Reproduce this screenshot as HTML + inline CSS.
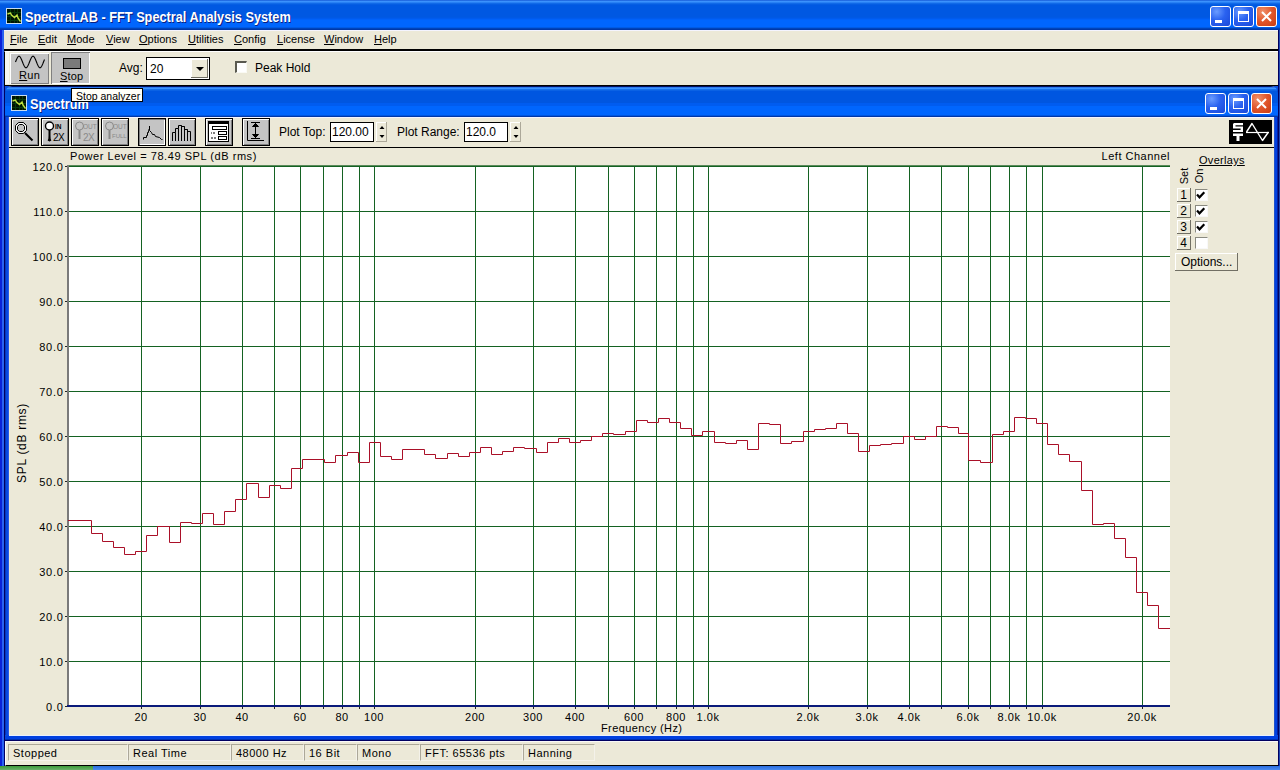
<!DOCTYPE html>
<html><head><meta charset="utf-8">
<style>
*{margin:0;padding:0;box-sizing:border-box}
html,body{width:1280px;height:770px;overflow:hidden;background:#ECE9D8}
body{position:relative;font-family:"Liberation Sans",sans-serif;font-size:11px;color:#000}
.a{position:absolute}
.tb{background:linear-gradient(#0843C8 0px,#3C94FE 1px,#3A8FFB 2px,#1671EC 3px,#0B62E4 4px,#0058E2 5px,#0058E2 17px,#005AE8 18px,#005CF4 19px,#0066FE 20px,#0066FE 27px,#0050CC 28px,#0038A8 29px)}
.ttl{color:#fff;font-weight:bold;font-size:14px;text-shadow:1px 1px 0 #0a1e80;white-space:nowrap}
.cbtn{width:21px;height:21px;border:1px solid #fff;border-radius:3px;background:radial-gradient(circle at 30% 25%,#6a9cff 0,#2a62f0 45%,#1a48d8 100%)}
.cbtn.x{background:radial-gradient(circle at 30% 25%,#f0906a 0,#e0552a 50%,#c83c14 100%)}
.menu span{position:absolute;top:33px;white-space:nowrap}
u{text-decoration:underline}
.yl{position:absolute;left:20px;width:43.5px;text-align:right;font-size:11px;line-height:12px;letter-spacing:0.7px}
.xl{position:absolute;top:711px;width:80px;text-align:center;font-size:11px;line-height:12px;letter-spacing:0.5px}
.tbtn{position:absolute;top:118px;width:28px;height:28px;border:1px solid #000;background:#c4c4c4;box-shadow:inset 1px 1px 0 #fff,inset -1px -1px 0 #808080}
.tbtn.dn{box-shadow:inset 1px 1px 0 #808080,inset -1px -1px 0 #fff}
.sp{position:absolute;top:744px;height:17px;border-top:1px solid #aca899;border-left:1px solid #aca899;border-right:1px solid #f4f2ea;border-bottom:1px solid #f4f2ea;padding:1px 0 0 4px;font-size:11px;line-height:14px;white-space:nowrap;letter-spacing:0.5px}
.rbtn{position:absolute;width:14px;height:14px;background:#ECE9D8;border-right:1px solid #716f64;border-bottom:1px solid #716f64;box-shadow:inset 1px 1px 0 #fff;text-align:center;font-size:12px;line-height:14px}
.chk{position:absolute;width:13px;height:12px;background:#fff;border-top:1px solid #8a8a80;border-left:1px solid #8a8a80;border-right:1px solid #f8f8f8;border-bottom:1px solid #f8f8f8}
</style></head><body>
<!-- main frame -->
<div class="a" style="left:0;top:0;width:1280px;height:770px;background:linear-gradient(90deg,#0A22D8 0,#0A22D8 2px,#2A62F0 2px,#2A62F0 4px,#000060 4px,#000060 5px,#0A4FE0 5px,#0A4FE0 1278px,#000060 1278px,#000060 1279px,#2048B0 1279px)"></div>
<div class="a tb" style="left:0;top:0;width:1280px;height:30px"></div>
<!-- title icon -->
<div class="a" style="left:6px;top:8px;width:16px;height:16px;background:#001400;border:1px solid #c8dcf0">
<svg width="14" height="14" style="position:absolute;left:0;top:0"><path d="M0 3.5H14M0 7.5H14M0 11.5H14M3.5 0V14M7.5 0V14M10.5 0V14" stroke="#063a0c" stroke-width="1"/><polyline points="0.5,5 3.5,4 4.5,6 7.5,8.5 10,6 11,9 13.5,12.5" fill="none" stroke="#c0e040" stroke-width="1.4"/></svg></div>
<div class="a ttl" style="left:25px;top:9px;transform:scaleX(0.91);transform-origin:0 0">SpectraLAB - FFT Spectral Analysis System</div>
<div class="a cbtn" style="left:1210px;top:6px"><div class="a" style="left:4px;top:13px;width:7px;height:3px;background:#fff"></div></div>
<div class="a cbtn" style="left:1233px;top:6px"><div class="a" style="left:4px;top:4px;width:11px;height:11px;border:1px solid #fff;border-top-width:3px"></div></div>
<div class="a cbtn x" style="left:1256px;top:6px"><svg width="19" height="19" class="a" style="left:0;top:0"><path d="M5 5L14 14M14 5L5 14" stroke="#fff" stroke-width="2"/></svg></div>

<!-- menu bar -->
<div class="a" style="left:4px;top:30px;width:1274px;height:20px;background:#ECE9D8;border-top:1px solid #f4f4ff"></div>
<div class="menu">
<span style="left:10px"><u>F</u>ile</span>
<span style="left:38px"><u>E</u>dit</span>
<span style="left:67px"><u>M</u>ode</span>
<span style="left:106px"><u>V</u>iew</span>
<span style="left:139px"><u>O</u>ptions</span>
<span style="left:188px"><u>U</u>tilities</span>
<span style="left:234px"><u>C</u>onfig</span>
<span style="left:277px"><u>L</u>icense</span>
<span style="left:324px"><u>W</u>indow</span>
<span style="left:374px"><u>H</u>elp</span>
</div>
<div class="a" style="left:4px;top:49px;width:1274px;height:2px;background:#000"></div>

<!-- toolbar -->
<div class="a" style="left:4px;top:51px;width:1274px;height:35px;background:#ECE9D8;border-left:1px solid #000;border-top:1px solid #fff"></div>
<div class="a" style="left:5px;top:52px;width:1273px;height:32px;border-left:4px solid #f6f6f0"></div>
<div class="a" style="left:10px;top:53px;width:39px;height:31px;background:#c4c4c4;box-shadow:inset 1px 1px 0 #fff,inset -1px -1px 0 #808080"></div>
<svg class="a" style="left:0;top:0" width="60" height="90"><polyline points="15.5,62.0 16.0,60.7 16.5,59.5 17.0,58.4 17.5,57.5 18.0,56.8 18.5,56.3 19.0,56.2 19.5,56.3 20.0,56.8 20.5,57.5 21.0,58.4 21.5,59.5 22.0,60.7 22.5,62.0 23.0,63.3 23.5,64.5 24.0,65.6 24.5,66.5 25.0,67.2 25.5,67.7 26.0,67.8 26.5,67.7 27.0,67.2 27.5,66.5 28.0,65.6 28.5,64.5 29.0,63.3 29.5,62.0 30.0,60.7 30.5,59.5 31.0,58.4 31.5,57.5 32.0,56.8 32.5,56.3 33.0,56.2 33.5,56.3 34.0,56.8 34.5,57.5 35.0,58.4 35.5,59.5 36.0,60.7 36.5,62.0 37.0,63.3 37.5,64.5 38.0,65.6 38.5,66.5 39.0,67.2 39.5,67.7 40.0,67.8 40.5,67.7 41.0,67.2 41.5,66.5 42.0,65.6 42.5,64.5 43.0,63.3 43.5,62.0 44.0,60.7 44.5,59.5" fill="none" stroke="#000" stroke-width="1.1"/></svg>
<div class="a" style="left:19px;top:69px;font-size:11px;letter-spacing:0.3px"><u>R</u>un</div>
<div class="a" style="left:51px;top:52px;width:39px;height:32px;background:#c4c4c4;box-shadow:inset 1px 1px 0 #808080,inset -1px -1px 0 #fff"></div>
<div class="a" style="left:63px;top:58px;width:18px;height:11px;background:#7a7a7a;border:1px solid #000"></div>
<div class="a" style="left:60px;top:70px;font-size:11px;letter-spacing:0.2px"><u>S</u>top</div>
<div class="a" style="left:119px;top:61px;font-size:12px">Avg:</div>
<div class="a" style="left:146px;top:57px;width:64px;height:23px;background:#fff;border:1px solid #000"></div>
<div class="a" style="left:150px;top:62px;font-size:12px">20</div>
<div class="a" style="left:191px;top:59px;width:17px;height:19px;background:#ECE9D8;box-shadow:inset -1px -1px 0 #716f64,inset 1px 1px 0 #fff"></div>
<svg class="a" style="left:196px;top:67px" width="9" height="5"><path d="M0 0H8L4 4Z" fill="#000"/></svg>
<div class="a" style="left:235px;top:61px;width:12px;height:12px;background:#fff;border-top:2px solid #5a5a50;border-left:2px solid #5a5a50;border-right:1px solid #fafaf4;border-bottom:1px solid #fafaf4"></div>
<div class="a" style="left:255px;top:61px;font-size:12px">Peak Hold</div>
<div class="a" style="left:4px;top:85px;width:1274px;height:1px;background:#000"></div>

<!-- child window -->
<div class="a" style="left:5px;top:86px;width:1273px;height:655px;border-radius:7px 7px 0 0;background:linear-gradient(90deg,#0834B8 0,#0834B8 1px,#0848E0 1px,#0848E0 3px,#2A5AE8 3px,#2A5AE8 4px,#E8F0FF 4px,#E8F0FF 5px,#ECE9D8 5px,#ECE9D8 1268px,#E8F4FF 1268px,#E8F4FF 1269px,#2050C8 1269px,#2050C8 1270px,#0040E0 1270px,#0040E0 1272px,#0020A0 1272px)"></div>
<div class="a" style="left:5px;top:735px;width:1273px;height:6px;background:linear-gradient(#0848E0 0,#0848E0 1px,#0040E0 1px,#0040E0 4px,#0030B0 4px,#0030B0 5px,#000060 5px)"></div>
<div class="a" style="left:9px;top:735px;width:1265px;height:1px;background:#E8F0FF"></div>
<div class="a" style="left:5px;top:86px;width:1273px;height:31px;border-radius:7px 7px 0 0;background:linear-gradient(#001060 0,#001060 1px,#2A7AF0 1px,#2A7AF0 2px,#3C94FE 2px,#3C94FE 3px,#1670EC 3px,#1670EC 4px,#0B62E4 4px,#0B62E4 5px,#0056E0 5px,#0056E0 17px,#005CF0 17px,#005CF0 20px,#0066FE 20px,#0066FE 29px,#0056E0 29px,#0056E0 30px,#0038A8 30px)"></div>
<div class="a" style="left:9px;top:117px;width:1265px;height:618px;background:#ECE9D8;border-top:1px solid #f4f4ff"></div>
<div class="a" style="left:11px;top:95px;width:16px;height:16px;background:#001400;border:1px solid #c8dcf0">
<svg width="14" height="14" style="position:absolute;left:0;top:0"><path d="M0 3.5H14M0 7.5H14M0 11.5H14M3.5 0V14M7.5 0V14M10.5 0V14" stroke="#063a0c" stroke-width="1"/><polyline points="0.5,5 3.5,4 4.5,6 7.5,8.5 10,6 11,9 13.5,12.5" fill="none" stroke="#c0e040" stroke-width="1.4"/></svg></div>
<div class="a ttl" style="left:30px;top:96px;transform:scaleX(0.91);transform-origin:0 0">Spectrum</div>
<div class="a cbtn" style="left:1205px;top:93px"><div class="a" style="left:4px;top:13px;width:7px;height:3px;background:#fff"></div></div>
<div class="a cbtn" style="left:1228px;top:93px"><div class="a" style="left:4px;top:4px;width:11px;height:11px;border:1px solid #fff;border-top-width:3px"></div></div>
<div class="a cbtn x" style="left:1251px;top:93px"><svg width="19" height="19" class="a" style="left:0;top:0"><path d="M5 5L14 14M14 5L5 14" stroke="#fff" stroke-width="2"/></svg></div>

<!-- child toolbar -->
<div class="tbtn" style="left:11px"></div>
<div class="tbtn" style="left:41px"></div>
<div class="tbtn" style="left:71px"></div>
<div class="tbtn" style="left:101px"></div>
<div class="tbtn dn" style="left:138px"></div>
<div class="tbtn" style="left:168px"></div>
<div class="tbtn" style="left:205px"></div>
<div class="tbtn" style="left:242px"></div>
<div class="a" style="left:279px;top:125px;font-size:12px">Plot Top:</div>
<div class="a" style="left:330px;top:122px;width:44px;height:20px;background:#fff;border:1px solid #000;font-size:12px;padding:2px 0 0 1px">120.00</div>
<div class="a" style="left:376px;top:122px;width:11px;height:20px;background:#ECE9D8;box-shadow:inset -1px -1px 0 #aca899,inset 1px 1px 0 #fff"></div>
<div class="a" style="left:397px;top:125px;font-size:12px">Plot Range:</div>
<div class="a" style="left:464px;top:122px;width:44px;height:20px;background:#fff;border:1px solid #000;font-size:12px;padding:2px 0 0 1px">120.0</div>
<div class="a" style="left:510px;top:122px;width:11px;height:20px;background:#ECE9D8;box-shadow:inset -1px -1px 0 #aca899,inset 1px 1px 0 #fff"></div>
<div class="a" style="left:1229px;top:120px;width:43px;height:24px;background:#000"></div>
<div class="a" style="left:9px;top:147px;width:1265px;height:1px;background:#000"></div>

<svg class="a" style="left:0;top:0" width="1280" height="770">
<!-- btn1 magnifier -->
<path d="M18.5 122.5h5l3 3v5l-3 3h-5l-3-3v-5z" fill="none" stroke="#000" stroke-width="1"/>
<path d="M19 123.5h4l2.5 2.5v4l-2.5 2.5h-4l-2.5-2.5v-4z" fill="none" stroke="#fff" stroke-width="1"/>
<path d="M19.5 124.5h3l2 2v3l-2 2h-3l-2-2v-3z" fill="none" stroke="#000" stroke-width="1"/>
<path d="M25 133L32.5 140.5" stroke="#000" stroke-width="2"/>
<!-- btn2 zoom in -->
<circle cx="49.5" cy="126" r="4" fill="#fff" stroke="#000" stroke-width="1.4"/>
<path d="M49.5 130v9l-1 2M49.5 130v9l1 2" stroke="#000" stroke-width="2"/>
<text x="55" y="129" font-family="Liberation Sans" font-weight="bold" font-size="6.5">IN</text>
<text x="53" y="141" font-family="Liberation Sans" font-size="10" letter-spacing="-0.5">2X</text>
<!-- btn3 zoom out 2x disabled -->
<g stroke="#8a8a8a" fill="none" stroke-width="1">
<circle cx="79.5" cy="126" r="4"/>
<circle cx="109.5" cy="126" r="4"/>
</g>
<path d="M79.5 130v9M109.5 130v9" stroke="#8a8a8a" stroke-width="2"/>
<text x="83" y="129" font-family="Liberation Sans" font-size="6.5" fill="#8a8a8a">OUT</text>
<text x="83" y="141" font-family="Liberation Sans" font-size="10" fill="#8a8a8a" letter-spacing="-0.5">2X</text>
<text x="113" y="129" font-family="Liberation Sans" font-size="6.5" fill="#8a8a8a">OUT</text>
<text x="112" y="138" font-family="Liberation Sans" font-size="6" fill="#8a8a8a">FULL</text>
<!-- btn5 peak -->
<polyline points="143.5,139.5 143.5,137.5 146.5,137.5 146.5,135.5 147.5,135.5 147.5,132.5 148.5,132.5 148.5,130.5 149.5,128.5 149.5,126 149.5,130.5 151.5,132.5 152.5,134.5 154.5,134.5 155.5,136.5 159.5,137.5 161.5,139.5 162.5,139.5" fill="none" stroke="#000" stroke-width="1"/>
<!-- btn6 bars -->
<path d="M172.5 141V132.5H175.5V141M175.5 132.5V128.5H178.5V141M178.5 128.5V125.5H181.5V141M181.5 125.5L181.5 126.5H184.5V141M184.5 129.5H187.5V141M187.5 131.5H190.5V141M184.5 126.5V129.5M187.5 129.5V131.5" fill="none" stroke="#000" stroke-width="1"/>
<!-- btn7 dialog -->
<rect x="208.5" y="121.5" width="20" height="20" fill="#fff" stroke="#000"/>
<rect x="208" y="121" width="21" height="3" fill="#000"/>
<rect x="212.5" y="126.5" width="14" height="3" fill="#fff" stroke="#000"/>
<rect x="218.5" y="131.5" width="8" height="3" fill="#fff" stroke="#000"/>
<rect x="218.5" y="136.5" width="8" height="3" fill="#fff" stroke="#000"/>
<path d="M211 133h1M213 133h2M211 138h2M214 138h2" stroke="#000" stroke-width="1.2"/>
<!-- btn8 range -->
<path d="M247.5 121V140.5H264" fill="none" stroke="#000"/>
<path d="M251 122.5H260M251 138.5H260M255.5 123V138" stroke="#000"/>
<path d="M252.5 126.5L255.5 123.5L258.5 126.5Z M252.5 134.5L255.5 137.5L258.5 134.5Z" fill="#000" stroke="#000"/>
<!-- ST logo -->
<path d="M1234 123h9v2.2h-7.5v1.3h7.5v5.5h-10v-2h7.6v-1.4h-7.6v-4.6z" fill="#fff"/>
<path d="M1233 133.5h10v2.5h-3.5v5h-3v-5h-3.5z" fill="#fff"/>
<path d="M1246 132.5H1269" stroke="#fff" stroke-width="1.2"/>
<path d="M1246.5 132L1252 123.5L1257.5 132.5L1262.5 140.5L1268.5 132" fill="none" stroke="#fff" stroke-width="1.4" stroke-linejoin="round"/>
<!-- spin arrows -->
<path d="M379.5 129h5l-2.5-3z M379.5 135h5l-2.5 3z M513.5 129h5l-2.5-3z M513.5 135h5l-2.5 3z" fill="#000"/>
</svg>
<!-- plot -->
<div class="a" style="left:70px;top:150px;letter-spacing:0.55px">Power Level = 78.49 SPL (dB rms)</div>
<div class="a" style="left:1069px;top:150px;width:101px;text-align:right;letter-spacing:0.5px">Left Channel</div>
<svg class="a" style="left:0;top:0" width="1280" height="770">
<rect x="68" y="166" width="1102" height="540" fill="#fff"/>
<line x1="68" y1="166.5" x2="1170" y2="166.5" stroke="#146222" stroke-width="1"/>
<line x1="65" y1="166.5" x2="67" y2="166.5" stroke="#222" stroke-width="1"/>
<line x1="68" y1="211.5" x2="1170" y2="211.5" stroke="#146222" stroke-width="1"/>
<line x1="65" y1="211.5" x2="67" y2="211.5" stroke="#222" stroke-width="1"/>
<line x1="68" y1="256.5" x2="1170" y2="256.5" stroke="#146222" stroke-width="1"/>
<line x1="65" y1="256.5" x2="67" y2="256.5" stroke="#222" stroke-width="1"/>
<line x1="68" y1="301.5" x2="1170" y2="301.5" stroke="#146222" stroke-width="1"/>
<line x1="65" y1="301.5" x2="67" y2="301.5" stroke="#222" stroke-width="1"/>
<line x1="68" y1="346.5" x2="1170" y2="346.5" stroke="#146222" stroke-width="1"/>
<line x1="65" y1="346.5" x2="67" y2="346.5" stroke="#222" stroke-width="1"/>
<line x1="68" y1="391.5" x2="1170" y2="391.5" stroke="#146222" stroke-width="1"/>
<line x1="65" y1="391.5" x2="67" y2="391.5" stroke="#222" stroke-width="1"/>
<line x1="68" y1="436.5" x2="1170" y2="436.5" stroke="#146222" stroke-width="1"/>
<line x1="65" y1="436.5" x2="67" y2="436.5" stroke="#222" stroke-width="1"/>
<line x1="68" y1="481.5" x2="1170" y2="481.5" stroke="#146222" stroke-width="1"/>
<line x1="65" y1="481.5" x2="67" y2="481.5" stroke="#222" stroke-width="1"/>
<line x1="68" y1="526.5" x2="1170" y2="526.5" stroke="#146222" stroke-width="1"/>
<line x1="65" y1="526.5" x2="67" y2="526.5" stroke="#222" stroke-width="1"/>
<line x1="68" y1="571.5" x2="1170" y2="571.5" stroke="#146222" stroke-width="1"/>
<line x1="65" y1="571.5" x2="67" y2="571.5" stroke="#222" stroke-width="1"/>
<line x1="68" y1="616.5" x2="1170" y2="616.5" stroke="#146222" stroke-width="1"/>
<line x1="65" y1="616.5" x2="67" y2="616.5" stroke="#222" stroke-width="1"/>
<line x1="68" y1="661.5" x2="1170" y2="661.5" stroke="#146222" stroke-width="1"/>
<line x1="65" y1="661.5" x2="67" y2="661.5" stroke="#222" stroke-width="1"/>
<line x1="68" y1="706.5" x2="1170" y2="706.5" stroke="#146222" stroke-width="1"/>
<line x1="65" y1="706.5" x2="67" y2="706.5" stroke="#222" stroke-width="1"/>
<line x1="141.5" y1="166" x2="141.5" y2="706" stroke="#146222" stroke-width="1"/>
<line x1="141.5" y1="706" x2="141.5" y2="709" stroke="#222" stroke-width="1"/>
<line x1="200.5" y1="166" x2="200.5" y2="706" stroke="#146222" stroke-width="1"/>
<line x1="200.5" y1="706" x2="200.5" y2="709" stroke="#222" stroke-width="1"/>
<line x1="242.5" y1="166" x2="242.5" y2="706" stroke="#146222" stroke-width="1"/>
<line x1="242.5" y1="706" x2="242.5" y2="709" stroke="#222" stroke-width="1"/>
<line x1="274.5" y1="166" x2="274.5" y2="706" stroke="#146222" stroke-width="1"/>
<line x1="274.5" y1="706" x2="274.5" y2="709" stroke="#222" stroke-width="1"/>
<line x1="300.5" y1="166" x2="300.5" y2="706" stroke="#146222" stroke-width="1"/>
<line x1="300.5" y1="706" x2="300.5" y2="709" stroke="#222" stroke-width="1"/>
<line x1="323.5" y1="166" x2="323.5" y2="706" stroke="#146222" stroke-width="1"/>
<line x1="323.5" y1="706" x2="323.5" y2="709" stroke="#222" stroke-width="1"/>
<line x1="342.5" y1="166" x2="342.5" y2="706" stroke="#146222" stroke-width="1"/>
<line x1="342.5" y1="706" x2="342.5" y2="709" stroke="#222" stroke-width="1"/>
<line x1="359.5" y1="166" x2="359.5" y2="706" stroke="#146222" stroke-width="1"/>
<line x1="359.5" y1="706" x2="359.5" y2="709" stroke="#222" stroke-width="1"/>
<line x1="374.5" y1="166" x2="374.5" y2="706" stroke="#146222" stroke-width="1"/>
<line x1="374.5" y1="706" x2="374.5" y2="709" stroke="#222" stroke-width="1"/>
<line x1="475.5" y1="166" x2="475.5" y2="706" stroke="#146222" stroke-width="1"/>
<line x1="475.5" y1="706" x2="475.5" y2="709" stroke="#222" stroke-width="1"/>
<line x1="533.5" y1="166" x2="533.5" y2="706" stroke="#146222" stroke-width="1"/>
<line x1="533.5" y1="706" x2="533.5" y2="709" stroke="#222" stroke-width="1"/>
<line x1="575.5" y1="166" x2="575.5" y2="706" stroke="#146222" stroke-width="1"/>
<line x1="575.5" y1="706" x2="575.5" y2="709" stroke="#222" stroke-width="1"/>
<line x1="608.5" y1="166" x2="608.5" y2="706" stroke="#146222" stroke-width="1"/>
<line x1="608.5" y1="706" x2="608.5" y2="709" stroke="#222" stroke-width="1"/>
<line x1="634.5" y1="166" x2="634.5" y2="706" stroke="#146222" stroke-width="1"/>
<line x1="634.5" y1="706" x2="634.5" y2="709" stroke="#222" stroke-width="1"/>
<line x1="656.5" y1="166" x2="656.5" y2="706" stroke="#146222" stroke-width="1"/>
<line x1="656.5" y1="706" x2="656.5" y2="709" stroke="#222" stroke-width="1"/>
<line x1="676.5" y1="166" x2="676.5" y2="706" stroke="#146222" stroke-width="1"/>
<line x1="676.5" y1="706" x2="676.5" y2="709" stroke="#222" stroke-width="1"/>
<line x1="693.5" y1="166" x2="693.5" y2="706" stroke="#146222" stroke-width="1"/>
<line x1="693.5" y1="706" x2="693.5" y2="709" stroke="#222" stroke-width="1"/>
<line x1="708.5" y1="166" x2="708.5" y2="706" stroke="#146222" stroke-width="1"/>
<line x1="708.5" y1="706" x2="708.5" y2="709" stroke="#222" stroke-width="1"/>
<line x1="808.5" y1="166" x2="808.5" y2="706" stroke="#146222" stroke-width="1"/>
<line x1="808.5" y1="706" x2="808.5" y2="709" stroke="#222" stroke-width="1"/>
<line x1="867.5" y1="166" x2="867.5" y2="706" stroke="#146222" stroke-width="1"/>
<line x1="867.5" y1="706" x2="867.5" y2="709" stroke="#222" stroke-width="1"/>
<line x1="909.5" y1="166" x2="909.5" y2="706" stroke="#146222" stroke-width="1"/>
<line x1="909.5" y1="706" x2="909.5" y2="709" stroke="#222" stroke-width="1"/>
<line x1="941.5" y1="166" x2="941.5" y2="706" stroke="#146222" stroke-width="1"/>
<line x1="941.5" y1="706" x2="941.5" y2="709" stroke="#222" stroke-width="1"/>
<line x1="968.5" y1="166" x2="968.5" y2="706" stroke="#146222" stroke-width="1"/>
<line x1="968.5" y1="706" x2="968.5" y2="709" stroke="#222" stroke-width="1"/>
<line x1="990.5" y1="166" x2="990.5" y2="706" stroke="#146222" stroke-width="1"/>
<line x1="990.5" y1="706" x2="990.5" y2="709" stroke="#222" stroke-width="1"/>
<line x1="1009.5" y1="166" x2="1009.5" y2="706" stroke="#146222" stroke-width="1"/>
<line x1="1009.5" y1="706" x2="1009.5" y2="709" stroke="#222" stroke-width="1"/>
<line x1="1026.5" y1="166" x2="1026.5" y2="706" stroke="#146222" stroke-width="1"/>
<line x1="1026.5" y1="706" x2="1026.5" y2="709" stroke="#222" stroke-width="1"/>
<line x1="1042.5" y1="166" x2="1042.5" y2="706" stroke="#146222" stroke-width="1"/>
<line x1="1042.5" y1="706" x2="1042.5" y2="709" stroke="#222" stroke-width="1"/>
<line x1="1142.5" y1="166" x2="1142.5" y2="706" stroke="#146222" stroke-width="1"/>
<line x1="1142.5" y1="706" x2="1142.5" y2="709" stroke="#222" stroke-width="1"/>
<line x1="68" y1="165.5" x2="1170" y2="165.5" stroke="#5a8a5a" stroke-width="1"/>
<rect x="67" y="165" width="2" height="541" fill="#7a7a7a"/>
<rect x="67" y="705" width="1103" height="2" fill="#0a1a7a"/>
<polyline points="68,520.5 91.5,520.5 91.5,533.5 102.5,533.5 102.5,541.5 113.5,541.5 113.5,547.5 124.5,547.5 124.5,554.5 135.5,554.5 135.5,551.5 146.5,551.5 146.5,535.5 157.5,535.5 157.5,526.5 169.5,526.5 169.5,542.5 180.5,542.5 180.5,522.5 191.5,522.5 191.5,523.5 202.5,523.5 202.5,513.5 213.5,513.5 213.5,524.5 224.5,524.5 224.5,511.5 235.5,511.5 235.5,499.5 246.5,499.5 246.5,483.5 258.5,483.5 258.5,497.5 269.5,497.5 269.5,485.5 280.5,485.5 280.5,488.5 291.5,488.5 291.5,468.5 302.5,468.5 302.5,459.5 324.5,459.5 324.5,462.5 335.5,462.5 335.5,455.5 347.5,455.5 347.5,452.5 358.5,452.5 358.5,462.5 369.5,462.5 369.5,442.5 380.5,442.5 380.5,456.5 391.5,456.5 391.5,459.5 402.5,459.5 402.5,449.5 424.5,449.5 424.5,454.5 435.5,454.5 435.5,458.5 447.5,458.5 447.5,453.5 458.5,453.5 458.5,456.5 469.5,456.5 469.5,452.5 480.5,452.5 480.5,447.5 491.5,447.5 491.5,454.5 502.5,454.5 502.5,451.5 513.5,451.5 513.5,447.5 524.5,447.5 524.5,448.5 536.5,448.5 536.5,452.5 547.5,452.5 547.5,442.5 558.5,442.5 558.5,438.5 569.5,438.5 569.5,442.5 580.5,442.5 580.5,440.5 591.5,440.5 591.5,436.5 602.5,436.5 602.5,433.5 613.5,433.5 613.5,434.5 625.5,434.5 625.5,431.5 636.5,431.5 636.5,420.5 647.5,420.5 647.5,422.5 658.5,422.5 658.5,418.5 669.5,418.5 669.5,422.5 680.5,422.5 680.5,428.5 691.5,428.5 691.5,435.5 702.5,435.5 702.5,431.5 714.5,431.5 714.5,442.5 725.5,442.5 725.5,443.5 736.5,443.5 736.5,440.5 747.5,440.5 747.5,449.5 758.5,449.5 758.5,423.5 769.5,423.5 769.5,424.5 780.5,424.5 780.5,443.5 791.5,443.5 791.5,441.5 803.5,441.5 803.5,431.5 814.5,431.5 814.5,429.5 825.5,429.5 825.5,428.5 836.5,428.5 836.5,423.5 847.5,423.5 847.5,433.5 858.5,433.5 858.5,451.5 869.5,451.5 869.5,445.5 880.5,445.5 880.5,444.5 891.5,444.5 891.5,443.5 903.5,443.5 903.5,436.5 914.5,436.5 914.5,439.5 925.5,439.5 925.5,436.5 936.5,436.5 936.5,426.5 947.5,426.5 947.5,427.5 958.5,427.5 958.5,433.5 968.5,433.5 968.5,460.5 980.5,460.5 980.5,462.5 992.5,462.5 992.5,434.5 1003.5,434.5 1003.5,431.5 1014.5,431.5 1014.5,417.5 1025.5,417.5 1025.5,418.5 1036.5,418.5 1036.5,423.5 1047.5,423.5 1047.5,444.5 1058.5,444.5 1058.5,454.5 1069.5,454.5 1069.5,461.5 1081.5,461.5 1081.5,490.5 1092.5,490.5 1092.5,524.5 1103.5,524.5 1103.5,523.5 1114.5,523.5 1114.5,538.5 1125.5,538.5 1125.5,557.5 1136.5,557.5 1136.5,592.5 1147.5,592.5 1147.5,605.5 1158.5,605.5 1158.5,628.5 1170,628.5" fill="none" stroke="#aa1028" stroke-width="1"/>
</svg>
<div class="yl" style="top:161px">120.0</div><div class="yl" style="top:206px">110.0</div><div class="yl" style="top:251px">100.0</div><div class="yl" style="top:296px">90.0</div><div class="yl" style="top:341px">80.0</div><div class="yl" style="top:386px">70.0</div><div class="yl" style="top:431px">60.0</div><div class="yl" style="top:476px">50.0</div><div class="yl" style="top:521px">40.0</div><div class="yl" style="top:566px">30.0</div><div class="yl" style="top:611px">20.0</div><div class="yl" style="top:656px">10.0</div><div class="yl" style="top:701px">0.0</div>
<div class="xl" style="left:101px">20</div><div class="xl" style="left:160px">30</div><div class="xl" style="left:202px">40</div><div class="xl" style="left:260px">60</div><div class="xl" style="left:302px">80</div><div class="xl" style="left:334px">100</div><div class="xl" style="left:435px">200</div><div class="xl" style="left:493px">300</div><div class="xl" style="left:535px">400</div><div class="xl" style="left:594px">600</div><div class="xl" style="left:636px">800</div><div class="xl" style="left:668px">1.0k</div><div class="xl" style="left:768px">2.0k</div><div class="xl" style="left:827px">3.0k</div><div class="xl" style="left:869px">4.0k</div><div class="xl" style="left:928px">6.0k</div><div class="xl" style="left:969px">8.0k</div><div class="xl" style="left:1002px">10.0k</div><div class="xl" style="left:1102px">20.0k</div>
<div class="a" style="left:601px;top:722px;letter-spacing:0.4px">Frequency (Hz)</div>
<div class="a" style="left:-18px;top:436px;width:80px;text-align:center;transform:rotate(-90deg);font-size:12px;letter-spacing:0.7px;white-space:nowrap">SPL (dB rms)</div>

<!-- overlays -->
<div class="a" style="left:1199px;top:154px;text-decoration:underline;letter-spacing:0.3px">Overlays</div>
<div class="a" style="left:1172px;top:170px;width:24px;text-align:center;transform:rotate(-90deg)">Set</div>
<div class="a" style="left:1187px;top:170px;width:24px;text-align:center;transform:rotate(-90deg)">On</div>
<div class="rbtn" style="left:1177px;top:188px">1</div>
<div class="rbtn" style="left:1177px;top:204px">2</div>
<div class="rbtn" style="left:1177px;top:220px">3</div>
<div class="rbtn" style="left:1177px;top:236px">4</div>
<div class="chk" style="left:1195px;top:189px"></div>
<div class="chk" style="left:1195px;top:205px"></div>
<div class="chk" style="left:1195px;top:221px"></div>
<div class="chk" style="left:1195px;top:237px"></div>
<svg class="a" style="left:0;top:0" width="1280" height="770"><!-- checkmarks -->
<path d="M1197 194.5l2.5 2.8l4.8-5" fill="none" stroke="#000" stroke-width="2.2"/>
<path d="M1197 210.5l2.5 2.8l4.8-5" fill="none" stroke="#000" stroke-width="2.2"/>
<path d="M1197 226.5l2.5 2.8l4.8-5" fill="none" stroke="#000" stroke-width="2.2"/>
</svg>
<div class="a" style="left:1175px;top:253px;width:63px;height:18px;background:#ECE9D8;border-right:1px solid #716f64;border-bottom:1px solid #716f64;box-shadow:inset 1px 1px 0 #fff;padding:2px 0 0 6px;font-size:12px">Options...</div>

<!-- tooltip -->
<div class="a" style="left:71px;top:88px;width:72px;height:14px;background:#FFFFF8;border:1px solid #000;padding:0.5px 0 0 4px;line-height:12px;white-space:nowrap;overflow:hidden;font-size:10.5px">Stop analyzer</div>

<!-- status bar -->
<div class="a" style="left:5px;top:741px;width:1273px;height:25px;background:#ECE9D8;border-top:1px solid #f8f8f8;border-left:1px solid #fff;border-bottom:1px solid #000"></div>
<div class="sp" style="left:8px;width:120px">Stopped</div>
<div class="sp" style="left:128px;width:103px">Real Time</div>
<div class="sp" style="left:231px;width:73px">48000 Hz</div>
<div class="sp" style="left:304px;width:53px">16 Bit</div>
<div class="sp" style="left:357px;width:63px">Mono</div>
<div class="sp" style="left:420px;width:103px">FFT: 65536 pts</div>
<div class="sp" style="left:523px;width:72px">Hanning</div>
<!-- taskbar -->
<div class="a" style="left:0;top:766px;width:1280px;height:4px;background:linear-gradient(#2A6EE0,#4A8AF0)"></div>
<div class="a" style="left:0;top:766px;width:93px;height:4px;background:linear-gradient(#3A9A3A,#6AB06A)"></div>
</body></html>
